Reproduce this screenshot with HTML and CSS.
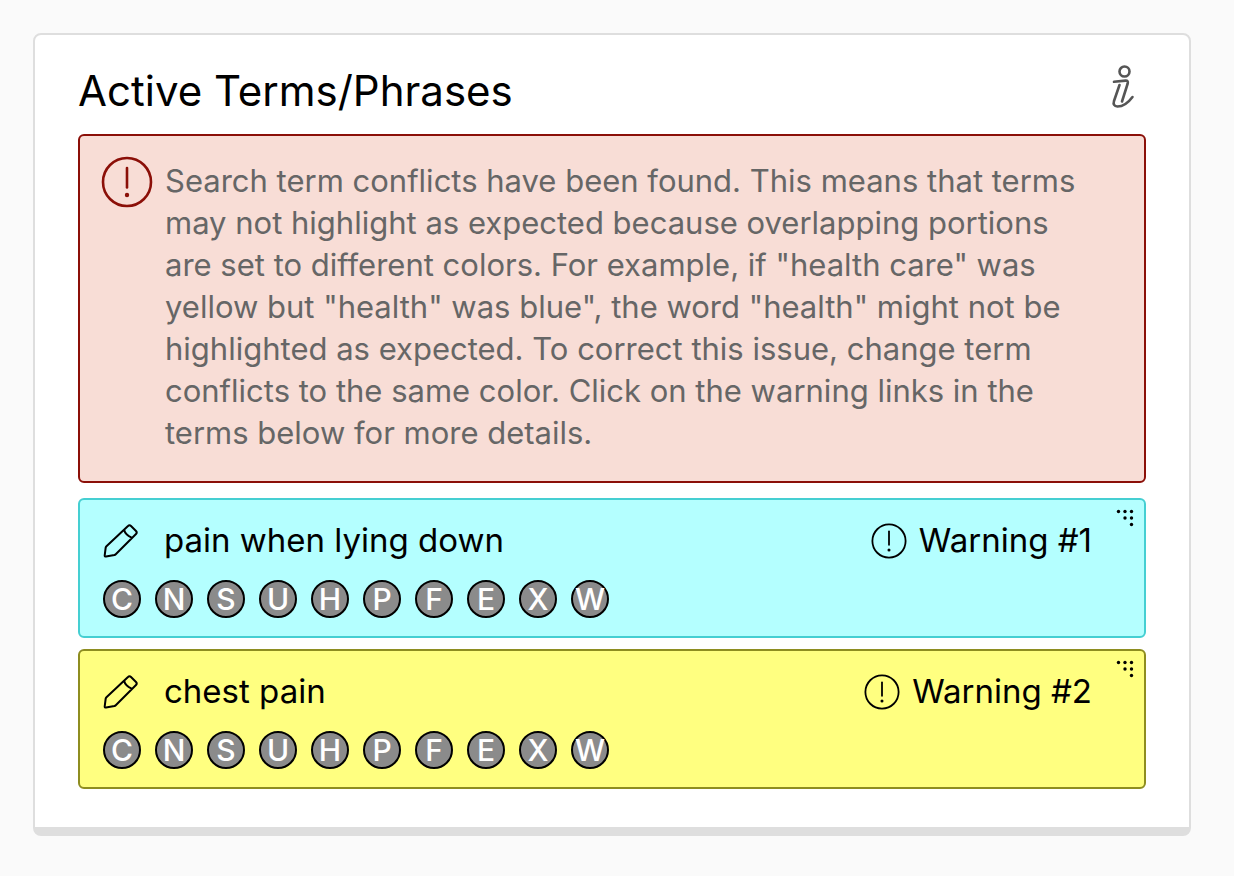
FILE: index.html
```html
<!DOCTYPE html>
<html lang="en">
<head>
<meta charset="utf-8">
<meta name="viewport" content="width=device-width, initial-scale=1">
<title>Active Terms/Phrases</title>
<link rel="stylesheet" href="styles.css">
</head>
<body>
<svg class="sprite" aria-hidden="true">
  <symbol id="alert" viewBox="0 0 52 52">
    <circle cx="26" cy="26" r="24"/>
    <path d="M26 12v19.500"/>
    <circle class="dot" cx="26" cy="39" r="2.200"/>
  </symbol>
  <symbol id="pencil" viewBox="0 0 36 36">
    <path d="M25 3 Q26.500 1.500 28 3 L33 8 Q34.500 9.500 33 11 L12.500 31.500 L11.500 32 L3 33.600 Q1.500 33.800 1.700 32.300 L2.700 24.500 L3.200 23.500 Z M21.300 7.200 Q22 11.500 28.600 14.600"/>
  </symbol>
  <symbol id="grip" viewBox="0 0 18 18">
    <circle cx="2.500" cy="2.500" r="1.700"/><circle cx="9" cy="2.500" r="1.700"/><circle cx="15.500" cy="2.500" r="1.700"/>
    <circle cx="9" cy="9" r="1.700"/><circle cx="15.500" cy="9" r="1.700"/><circle cx="15.500" cy="15.500" r="1.700"/>
  </symbol>
</svg>
<main class="card">
  <header class="card-header">
    <h1 class="title">Active Terms/Phrases</h1>
    <button class="icon-button" type="button" aria-label="Information">
      <svg class="info-icon" viewBox="0 0 24 44"><circle cx="13.500" cy="6.500" r="5"/><path d="M3 16.800 L14.500 15.600 Q17.500 15.400 16.700 18.500 L11 36.500 M8.500 20 L3 36 Q1.500 41 6.500 41.500 Q14.500 41.500 21.500 32"/></svg>
    </button>
  </header>
  <section class="alert" role="alert">
    <svg class="alert-icon" aria-hidden="true"><use href="#alert"/></svg>
    <p class="alert-text">Search term conflicts have been found. This means that terms may not highlight as expected because overlapping portions are set to different colors. For example, if "health care" was yellow but "health" was blue", the word "health" might not be highlighted as expected. To correct this issue, change term conflicts to the same color. Click on the warning links in the terms below for more details.</p>
  </section>
  <ul class="terms">
    <li class="term term-cyan">
      <div class="term-row">
        <button class="icon-button" type="button" aria-label="Edit pain when lying down"><svg class="pencil"><use href="#pencil"/></svg></button>
        <h2 class="term-name">pain when lying down</h2>
        <a class="warning" href="#"><svg class="warning-icon" aria-hidden="true"><use href="#alert"/></svg>Warning #1</a>
      </div>
      <div class="flags">
        <button class="flag" type="button">C</button>
        <button class="flag" type="button">N</button>
        <button class="flag" type="button">S</button>
        <button class="flag" type="button">U</button>
        <button class="flag" type="button">H</button>
        <button class="flag" type="button">P</button>
        <button class="flag" type="button">F</button>
        <button class="flag" type="button">E</button>
        <button class="flag" type="button">X</button>
        <button class="flag" type="button">W</button>
      </div>
      <svg class="grip" aria-hidden="true"><use href="#grip"/></svg>
    </li>
    <li class="term term-yellow">
      <div class="term-row">
        <button class="icon-button" type="button" aria-label="Edit chest pain"><svg class="pencil"><use href="#pencil"/></svg></button>
        <h2 class="term-name">chest pain</h2>
        <a class="warning" href="#"><svg class="warning-icon" aria-hidden="true"><use href="#alert"/></svg>Warning #2</a>
      </div>
      <div class="flags">
        <button class="flag" type="button">C</button>
        <button class="flag" type="button">N</button>
        <button class="flag" type="button">S</button>
        <button class="flag" type="button">U</button>
        <button class="flag" type="button">H</button>
        <button class="flag" type="button">P</button>
        <button class="flag" type="button">F</button>
        <button class="flag" type="button">E</button>
        <button class="flag" type="button">X</button>
        <button class="flag" type="button">W</button>
      </div>
      <svg class="grip" aria-hidden="true"><use href="#grip"/></svg>
    </li>
  </ul>
</main>
</body>
</html>
```
FILE: styles.css
```css
* {
  box-sizing: border-box;
}

body {
  margin: 0;
  padding: 33px 43px 39px 33px;
  background: #fafafa;
  color: #000;
  font-family: Inter, "Open Sans", sans-serif;
}

h1, h2, p, ul {
  margin: 0;
  padding: 0;
  font-weight: 400;
}

button {
  padding: 0;
  font: inherit;
  cursor: pointer;
}

svg {
  display: block;
  fill: none;
  stroke: currentColor;
  stroke-linecap: round;
  stroke-linejoin: round;
}

.sprite {
  position: absolute;
  width: 0;
  height: 0;
}

.dot {
  fill: currentColor;
  stroke: none;
}

.card {
  padding: 30px 43px 38px;
  border: 2px solid #dedede;
  border-bottom-width: 9px;
  border-radius: 8px;
  background: #fff;
}

.card-header {
  display: flex;
  align-items: flex-start;
  justify-content: space-between;
  padding-right: 11px;
  margin-bottom: 17px;
}

.title {
  font-size: 42px;
  line-height: 52px;
}

.icon-button {
  border: 0;
  background: none;
  color: inherit;
}

.info-icon {
  width: 24px;
  height: 44px;
  color: #555;
  stroke-width: 2.600;
}

.alert {
  display: flex;
  gap: 12px;
  padding: 20px 53px 27px 21px;
  margin-bottom: 15px;
  border: 2px solid #8b0f08;
  border-radius: 6px;
  background: #f8ddd6;
}

.alert-icon {
  flex: none;
  width: 52px;
  height: 52px;
  color: #8b0f08;
  stroke-width: 2.600;
}

.alert-text {
  padding-top: 4px;
  color: #666;
  font-size: 31px;
  line-height: 42px;
}

.terms {
  display: grid;
  gap: 11px;
  list-style: none;
}

.term {
  position: relative;
  padding: 19px 52px 18px 23px;
  border: 2px solid;
  border-radius: 6px;
}

.term-cyan {
  border-color: #45cfd2;
  background: #b4ffff;
}

.term-yellow {
  border-color: #8e8d20;
  background: #ffff80;
}

.term-row {
  display: flex;
  align-items: center;
  margin-bottom: 18px;
}

.pencil {
  width: 36px;
  height: 36px;
  stroke-width: 2;
}

.term-name {
  flex: 1;
  padding-left: 25px;
  font-size: 33px;
  line-height: 43px;
}

.warning {
  display: flex;
  align-items: center;
  gap: 12px;
  color: inherit;
  font-size: 33px;
  line-height: 43px;
  text-decoration: none;
}

.warning-icon {
  width: 36px;
  height: 36px;
  stroke-width: 2.600;
}

.flags {
  display: flex;
  flex-wrap: wrap;
  gap: 14px;
}

.flag {
  display: flex;
  align-items: center;
  justify-content: center;
  width: 38px;
  height: 38px;
  border: 2px solid #000;
  border-radius: 50%;
  background: #8b8b8b;
  color: #fff;
  font-size: 30px;
  font-weight: 500;
  line-height: 34px;
}

.grip {
  position: absolute;
  top: 9px;
  right: 10px;
  width: 18px;
  height: 18px;
  fill: currentColor;
  stroke: none;
}
```
